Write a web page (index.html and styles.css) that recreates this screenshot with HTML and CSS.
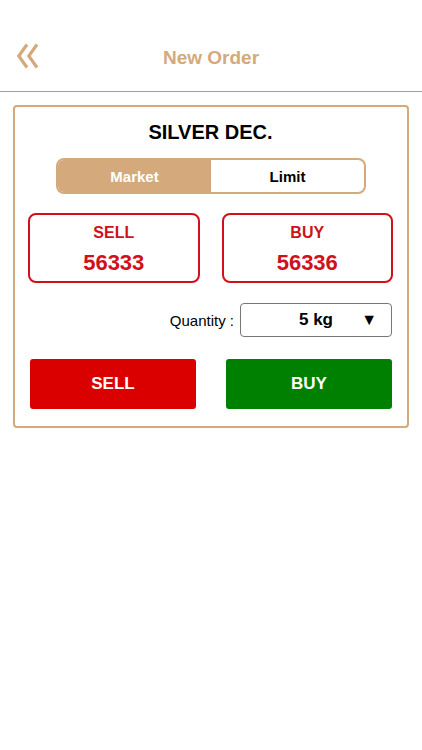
FILE: index.html
```html
<!DOCTYPE html>
<html lang="en">
<head>
  <meta charset="UTF-8" />
  <meta name="viewport" content="width=device-width, initial-scale=1.0" />
  <title>New Order</title>
  <link rel="stylesheet" href="styles.css">
</head>
<body>
  <header class="topbar">
    <button class="back-btn" aria-label="Back">
      <svg width="24" height="26" viewBox="0 0 24 26">
        <polyline points="10,1.5 1.8,13 10,24.5" fill="none" stroke="#d4aa7d" stroke-width="3.2"/>
        <polyline points="20,1.5 11.8,13 20,24.5" fill="none" stroke="#d4aa7d" stroke-width="3.2"/>
      </svg>
    </button>
    <h1 class="title">New Order</h1>
  </header>

  <main class="card">
    <h2 class="symbol">SILVER DEC.</h2>

    <div class="segment">
      <button class="seg active">Market</button>
      <button class="seg">Limit</button>
    </div>

    <div class="prices">
      <div class="price-box">
        <span class="price-label">SELL</span>
        <span class="price-value">56333</span>
      </div>
      <div class="price-box">
        <span class="price-label">BUY</span>
        <span class="price-value">56336</span>
      </div>
    </div>

    <div class="qty-row">
      <span class="qty-label">Quantity :</span>
      <div class="qty-select">
        <span></span>
        <span class="qty-value">5 kg</span>
        <span class="qty-arrow">&#9660;</span>
      </div>
    </div>

    <div class="actions">
      <button class="action sell">SELL</button>
      <button class="action buy">BUY</button>
    </div>
  </main>
</body>
</html>
```

FILE: styles.css
```css
body {
  margin: 0;
  background: #fff;
  font-family: "Liberation Sans", Arial, sans-serif;
  color: #000;
}

button {
  font-family: inherit;
  border: none;
  background: none;
  padding: 0;
}

.topbar {
  position: relative;
  height: 91px;
  border-bottom: 1px solid #a0a0a0;
  display: flex;
  align-items: center;
  justify-content: center;
}

.back-btn {
  position: absolute;
  left: 17px;
  top: 43px;
  display: flex;
}

.title {
  margin: 24px 0 0;
  font-size: 19px;
  font-weight: bold;
  color: #d4aa7d;
}

.card {
  margin: 13px 13px 0;
  border: 2px solid #d4aa7d;
  border-radius: 4px;
  padding: 12px 14px 17px 13px;
  display: flex;
  flex-direction: column;
}

.symbol {
  margin: 0;
  text-align: center;
  font-size: 20px;
  line-height: 26px;
  font-weight: bold;
}

.segment {
  margin: 13px 27px 0 28px;
  height: 36px;
  box-sizing: border-box;
  border: 2px solid #d4aa7d;
  border-radius: 8px;
  overflow: hidden;
  display: grid;
  grid-template-columns: 1fr 1fr;
}

.seg {
  font-size: 15px;
  font-weight: bold;
  color: #000;
}

.seg.active {
  background: #d4aa7d;
  color: #fff;
}

.prices {
  margin-top: 19px;
  display: grid;
  grid-template-columns: 1fr 1fr;
  gap: 22px;
}

.price-box {
  height: 70px;
  box-sizing: border-box;
  border: 2px solid #d0101a;
  border-radius: 8px;
  padding-top: 4px;
  display: flex;
  flex-direction: column;
  align-items: center;
  justify-content: center;
  gap: 8px;
  color: #d0101a;
  font-weight: bold;
}

.price-label {
  font-size: 16px;
}

.price-value {
  font-size: 22px;
}

.qty-row {
  margin-top: 20px;
  display: flex;
  justify-content: flex-end;
  align-items: center;
  gap: 6px;
  padding-right: 1px;
}

.qty-label {
  font-size: 15px;
}

.qty-select {
  width: 152px;
  height: 34px;
  box-sizing: border-box;
  border: 1px solid #777;
  border-radius: 4px;
  display: grid;
  grid-template-columns: 1fr auto 1fr;
  align-items: center;
}

.qty-value {
  font-size: 17px;
  font-weight: bold;
}

.qty-arrow {
  justify-self: end;
  padding-right: 14px;
  font-size: 16px;
}

.actions {
  margin-top: 22px;
  padding: 0 1px 0 2px;
  display: grid;
  grid-template-columns: 1fr 1fr;
  gap: 30px;
}

.action {
  height: 50px;
  border-radius: 3px;
  color: #fff;
  font-size: 17px;
  font-weight: bold;
}

.action.sell {
  background: #db0000;
}

.action.buy {
  background: #008000;
}
```
